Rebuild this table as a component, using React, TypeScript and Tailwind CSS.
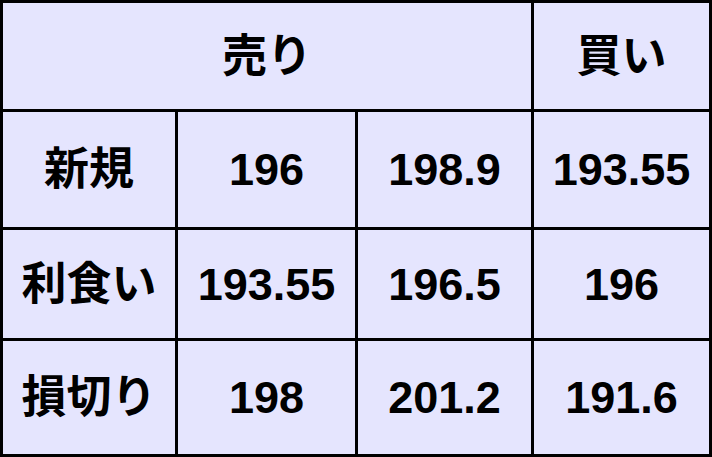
export default function App() {
  const rows = [
    ['新規', '196', '198.9', '193.55'],
    ['利食い', '193.55', '196.5', '196'],
    ['損切り', '198', '201.2', '191.6'],
  ]
  const cell = 'bg-[#e5e5fe] flex items-center justify-center text-black font-bold text-[45px] leading-none'
  return (
    <div
      className="w-[712px] h-[457px] bg-black p-[3px] grid grid-cols-[172px_177px_173px_175px] grid-rows-[106px_115px_108px_113px] gap-[3px]"
      style={{ fontFamily: '"Liberation Sans", Arial, "Noto Sans CJK JP", sans-serif' }}
    >
      <div className={`${cell} col-span-3`}>売り</div>
      <div className={cell}>買い</div>
      {rows.map((r) =>
        r.map((v, i) => (
          <div key={r[0] + i} className={cell}>
            {v}
          </div>
        ))
      )}
    </div>
  )
}
